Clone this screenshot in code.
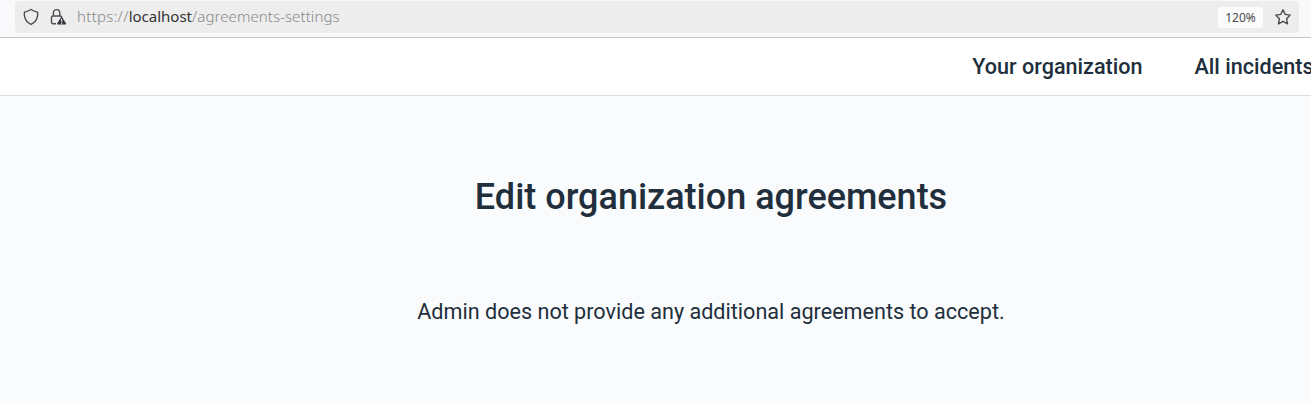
<div class="page">
  <div class="chrome">
    <div class="urlbar">
      <svg class="shield" width="16" height="18" viewBox="0 0 16 18" fill="none" stroke="#4b4b50" stroke-width="1.4" stroke-linejoin="round"><path d="M8 1.500Q10.500 3.300 14.500 4.100Q15 6.500 14.200 9.300Q13 14 8 16.300Q3 14 1.800 9.300Q1 6.500 1.500 4.100Q5.500 3.300 8 1.500z"/></svg>
      <svg class="lock" width="17" height="18" viewBox="0 0 17 18"><path d="M3.400 8V4.800a3.200 3.200 0 0 1 6.400 0V8M6 15.800H3a1.500 1.500 0 0 1-1.500-1.500V9.500A1.500 1.500 0 0 1 3 8h7.200A1.500 1.500 0 0 1 11.700 9" fill="none" stroke="#4b4b50" stroke-width="1.400"/><path d="M11.600 9.500 15.500 15.800H7.700z" fill="#38383d" stroke="#38383d" stroke-width="1.400" stroke-linejoin="round"/><path d="M11.600 11v2.500M11.600 14.500v1.200" stroke="#eee" stroke-width="1.200"/></svg>
      <span class="url"><span class="scheme">https://</span><b>localhost</b><span class="path">/agreements-settings</span></span>
      <span class="zoom">120%</span>
      <svg class="star" width="18" height="18" viewBox="0 0 18 18" fill="none" stroke="#4b4b50" stroke-width="1.400" stroke-linejoin="round"><path d="m9 1.800 2.200 4.600 5 .7-3.600 3.600.9 5.200L9 13.400l-4.500 2.500.9-5.200L1.800 7.100l5-.7z"/></svg>
    </div>
  </div>
  <nav><span>Your organization</span><span>All incidents</span></nav>
  <main>
    <h1>Edit organization agreements</h1>
    <p>Admin does not provide any additional agreements to accept.</p>
  </main>
</div>

<style>
  :global(body) { overflow: hidden; }
  .page { width: 1311px; height: 404px; overflow: hidden; background: #fafbfd; color: #212f3c; font-family: Roboto, sans-serif; display: flex; flex-direction: column; box-sizing: border-box; }
  .chrome { height: 38px; flex: none; background: #f9f9fb; border-bottom: 1px solid #c6c6c6; box-sizing: border-box; padding-top: 1px; }
  .urlbar { box-sizing: border-box; margin: 0 12px 0 15px; height: 32px; background: #ededed; border-radius: 4px; display: flex; align-items: center; padding: 0 7px 0 8px; }
  .lock { margin-left: 11px; }
  .url { margin-left: 10px; padding-bottom: 2px; font: 300 15px "Noto Sans", sans-serif; color: #888; flex: 1; white-space: nowrap; }
  .url b { font-weight: 400; color: #333; }
  .scheme { letter-spacing: 0.300px; }
  .path { letter-spacing: 0.080px; }
  .zoom { width: 45px; height: 21px; line-height: 22px; background: #fbfbfb; color: #4a4a4a; border-radius: 3px; font-family: "Noto Sans", sans-serif; font-size: 12px; text-align: center; margin-right: 11px; }
  nav { height: 57px; flex: none; background: #fff; border-bottom: 1px solid #dadde2; display: flex; align-items: center; gap: 52px; padding-left: 972.200px; white-space: nowrap; font-size: 21.600px; font-weight: 500; }
  main { width: 1422px; flex: 1; text-align: center; }
  h1 { margin: 79px 0 0; font-size: 36px; line-height: 44px; font-weight: 500; }
  p { margin: 77px 0 0; font-size: 21.600px; line-height: 32px; }
</style>
